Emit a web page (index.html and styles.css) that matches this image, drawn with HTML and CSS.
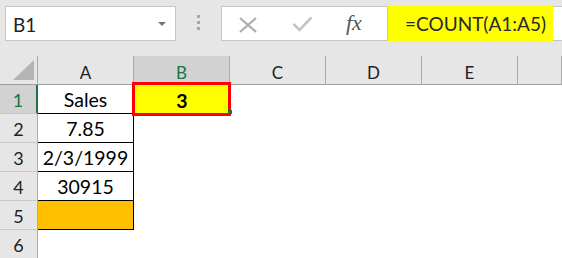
FILE: index.html
```html
<!DOCTYPE html>
<html>
<head>
<meta charset="utf-8">
<link rel="stylesheet" href="styles.css">
</head>
<body>
<div class="toolbar">
  <div class="namebox">
    <span class="name">B1</span>
    <span class="caret"></span>
  </div>
  <div class="dots"><i></i><i></i><i></i></div>
  <div class="fbar">
    <svg class="ic-x" width="20" height="16" viewBox="0 0 20 16"><path d="M2 1 L18 15 M18 1 L2 15" stroke="#adadad" stroke-width="2.2" fill="none"/></svg>
    <svg class="ic-check" width="21" height="16" viewBox="0 0 21 16"><path d="M1.5 8 L7.5 14 L19.5 1.5" stroke="#c4c4c4" stroke-width="2.6" fill="none"/></svg>
    <span class="fx">fx</span>
    <div class="formula">=COUNT(A1:A5)</div>
  </div>
</div>
<div class="sheet">
  <div class="corner"><span class="tri"></span></div>
  <div class="ch">A</div>
  <div class="ch sel">B</div>
  <div class="ch">C</div>
  <div class="ch">D</div>
  <div class="ch">E</div>
  <div class="ch"></div>

  <div class="rh sel">1</div>
  <div class="c a">Sales</div>
  <div class="c b1"><b>3</b><span class="handle"></span></div>
  <div class="c"></div><div class="c"></div><div class="c"></div><div class="c"></div>

  <div class="rh">2</div>
  <div class="c a">7.85</div>
  <div class="c"></div><div class="c"></div><div class="c"></div><div class="c"></div><div class="c"></div>

  <div class="rh">3</div>
  <div class="c a">2/3/1999</div>
  <div class="c"></div><div class="c"></div><div class="c"></div><div class="c"></div><div class="c"></div>

  <div class="rh">4</div>
  <div class="c a">30915</div>
  <div class="c"></div><div class="c"></div><div class="c"></div><div class="c"></div><div class="c"></div>

  <div class="rh">5</div>
  <div class="c a orange"></div>
  <div class="c"></div><div class="c"></div><div class="c"></div><div class="c"></div><div class="c"></div>

  <div class="rh">6</div>
  <div class="c"></div>
  <div class="c"></div><div class="c"></div><div class="c"></div><div class="c"></div><div class="c"></div>
</div>
</body>
</html>
```
FILE: styles.css
```css
html, body {
  margin: 0;
  padding: 0;
}
body {
  width: 562px;
  height: 258px;
  overflow: hidden;
  background: #e6e6e6;
  font-family: Lato, "Noto Sans", sans-serif;
  color: #000;
}
.toolbar {
  height: 56px;
  box-sizing: border-box;
  padding: 6px 0 0 5px;
  display: flex;
  align-items: flex-start;
}
.namebox {
  width: 171px;
  height: 35px;
  box-sizing: border-box;
  border: 1px solid #c6c6c6;
  background: #fff;
  display: flex;
  align-items: center;
  justify-content: space-between;
  padding: 0 9px 0 7px;
  flex: none;
}
.name {
  font-size: 19px;
  color: #222;
  padding-top: 1px;
}
.caret {
  width: 0;
  height: 0;
  border-left: 4px solid transparent;
  border-right: 4px solid transparent;
  border-top: 4px solid #777;
  margin-top: 1px;
}
.dots {
  width: 45px;
  flex: none;
  display: flex;
  flex-direction: column;
  align-items: center;
  gap: 3px;
  padding-top: 9px;
}
.dots i {
  display: block;
  width: 3px;
  height: 3px;
  background: #a6a6a6;
}
.fbar {
  flex: 1;
  min-width: 0;
  height: 35px;
  box-sizing: border-box;
  border: 1px solid #c6c6c6;
  border-right: none;
  background: #fff;
  display: flex;
  align-items: center;
  padding-left: 16px;
}
.ic-x {
  flex: none;
  margin-top: 2px;
}
.ic-check {
  flex: none;
  margin-left: 34px;
}
.fx {
  flex: none;
  margin-left: 33px;
  font-family: "Liberation Serif", serif;
  font-style: italic;
  font-size: 22px;
  color: #555;
  width: 22px;
  padding-bottom: 2px;
}
.formula {
  flex: none;
  margin-left: 19px;
  align-self: stretch;
  margin-top: -1px;
  margin-bottom: -1px;
  width: 166px;
  box-sizing: border-box;
  background: #ffff00;
  border-left: 1px solid #c8c8c8;
  padding-left: 17px;
  display: flex;
  align-items: center;
  font-size: 19px;
  color: #2a2a2a;
  white-space: nowrap;
}
.sheet {
  display: grid;
  grid-template-columns: 38px repeat(5, 96px) 1fr;
  grid-auto-rows: 29px;
  background: #fff;
}
.corner {
  background: #e6e6e6;
  border-right: 1px solid #ababab;
  border-bottom: 1px solid #9e9e9e;
  display: flex;
  justify-content: flex-end;
  align-items: flex-end;
  padding: 0 3px 4px 0;
}
.tri {
  width: 0;
  height: 0;
  border-left: 21px solid transparent;
  border-bottom: 20px solid #b4b4b4;
}
.ch {
  background: #e6e6e6;
  border-right: 1px solid #ababab;
  border-bottom: 1px solid #9e9e9e;
  display: flex;
  justify-content: center;
  align-items: center;
  padding-top: 5px;
  font-size: 17px;
  color: #222;
}
.ch.sel {
  background: #d2d2d2;
  color: #217346;
}
.rh {
  background: #e6e6e6;
  border-right: 1px solid #ababab;
  border-bottom: 1px solid #c8c8c8;
  display: flex;
  justify-content: center;
  align-items: center;
  padding-top: 2px;
  font-size: 18px;
  color: #222;
}
.rh.sel {
  background: #d2d2d2;
  color: #217346;
  border-right: 2px solid #217346;
}
.sheet > * {
  box-sizing: border-box;
}
.c {
  display: flex;
  justify-content: center;
  align-items: center;
  font-size: 19.5px;
  padding-top: 1px;
}
.c.a {
  border-right: 1px solid #000;
  border-bottom: 1px solid #000;
}
.c.orange {
  background: #ffc000;
}
.b1 {
  position: relative;
  background: #ffff00;
}
.b1::before {
  content: "";
  position: absolute;
  left: -2px;
  top: -3px;
  width: 99px;
  height: 34px;
  box-sizing: border-box;
  border: 3px solid #ff0000;
}
.b1 b {
  font-weight: 700;
  position: relative;
}
.handle {
  position: absolute;
  right: -2px;
  bottom: 0px;
  width: 4px;
  height: 4px;
  background: #217346;
}
```
